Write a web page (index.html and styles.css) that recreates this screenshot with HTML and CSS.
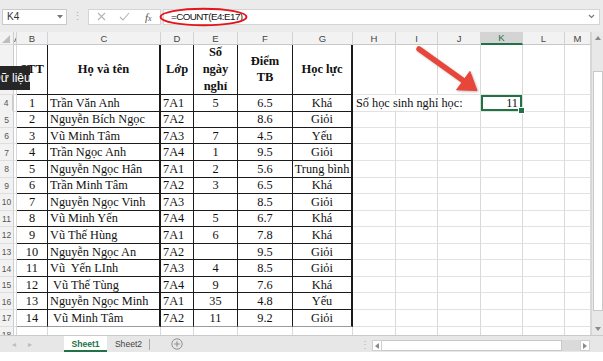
FILE: index.html
```html
<!DOCTYPE html>
<html lang="vi">
<head>
<meta charset="utf-8">
<title>Excel COUNT</title>
<link rel="stylesheet" href="styles.css">
</head>
<body>
<div class="fbar">
  <div class="namebox"><span>K4</span><svg class="caret" width="6" height="4" viewBox="0 0 6 4"><path d="M0 0H6L3 3.5Z" fill="#777"/></svg></div>
  <div class="grip">⋮</div>
  <div class="fnbox">
    <span class="fbtn"><svg width="9" height="9" viewBox="0 0 9 9"><path d="M1 1L8 8M8 1L1 8" stroke="#b3b3b3" stroke-width="1.1"/></svg></span>
    <span class="fbtn"><svg width="11" height="9" viewBox="0 0 11 9"><path d="M1 5L4 8L10 1" stroke="#b3b3b3" stroke-width="1.1" fill="none"/></svg></span>
    <span class="fbtn fx"><i>f</i><span class="x">x</span></span>
  </div>
  <div class="formula"><span class="ftext">=COUNT(E4:E17)</span><svg class="chev" width="7" height="5" viewBox="0 0 7 5"><path d="M1 1L3.5 3.5L6 1" stroke="#777" stroke-width="1.1" fill="none"/></svg></div>
  <svg class="ring" width="90" height="20" viewBox="0 0 90 20"><ellipse cx="44.5" cy="10" rx="43" ry="8.3" fill="none" stroke="#e5141c" stroke-width="2"/></svg>
</div>

<div class="main">
  <div class="grid">
    <div class="row hdr">
      <div class="corner"><svg width="8" height="8" viewBox="0 0 8 8"><path d="M8 0V8H0Z" fill="#bdbdbd"/></svg></div>
      <div class="cola">A</div><div>B</div><div>C</div><div>D</div><div>E</div><div>F</div><div>G</div><div>H</div><div>I</div><div>J</div><div class="sel">K</div><div>L</div><div>M</div>
    </div>
    <div class="row tbl r3">
      <div>3</div><div></div><div>STT</div><div>Họ và tên</div><div>Lớp</div><div>Số<br>ngày<br>nghỉ</div><div>Điểm<br>TB</div><div>Học lực</div><div></div><div></div><div></div><div></div><div></div><div></div>
    </div>
    <div class="row tbl data">
      <div class="on">4</div><div></div><div>1</div><div>Trần Văn Anh</div><div>7A1</div><div>5</div><div>6.5</div><div>Khá</div><div class="spill">Số học sinh nghỉ học:</div><div class="nogrid"></div><div></div><div class="k4">11</div><div></div><div></div>
    </div>
    <div class="row tbl data">
      <div>5</div><div></div><div>2</div><div>Nguyễn Bích Ngọc</div><div>7A2</div><div></div><div>8.6</div><div>Giỏi</div><div></div><div></div><div></div><div></div><div></div><div></div>
    </div>
    <div class="row tbl data">
      <div>6</div><div></div><div>3</div><div>Vũ Minh Tâm</div><div>7A3</div><div>7</div><div>4.5</div><div>Yếu</div><div></div><div></div><div></div><div></div><div></div><div></div>
    </div>
    <div class="row tbl data">
      <div>7</div><div></div><div>4</div><div>Trần Ngọc Anh</div><div>7A4</div><div>1</div><div>9.5</div><div>Giỏi</div><div></div><div></div><div></div><div></div><div></div><div></div>
    </div>
    <div class="row tbl data">
      <div>8</div><div></div><div>5</div><div>Nguyễn Ngọc Hân</div><div>7A1</div><div>2</div><div>5.6</div><div>Trung bình</div><div></div><div></div><div></div><div></div><div></div><div></div>
    </div>
    <div class="row tbl data">
      <div>9</div><div></div><div>6</div><div>Trần Minh Tâm</div><div>7A2</div><div>3</div><div>6.5</div><div>Khá</div><div></div><div></div><div></div><div></div><div></div><div></div>
    </div>
    <div class="row tbl data">
      <div>10</div><div></div><div>7</div><div>Nguyễn Ngọc Vinh</div><div>7A3</div><div></div><div>8.5</div><div>Giỏi</div><div></div><div></div><div></div><div></div><div></div><div></div>
    </div>
    <div class="row tbl data">
      <div>11</div><div></div><div>8</div><div>Vũ Minh Yến</div><div>7A4</div><div>5</div><div>6.7</div><div>Khá</div><div></div><div></div><div></div><div></div><div></div><div></div>
    </div>
    <div class="row tbl data">
      <div>12</div><div></div><div>9</div><div>Vũ Thế Hùng</div><div>7A1</div><div>6</div><div>7.8</div><div>Khá</div><div></div><div></div><div></div><div></div><div></div><div></div>
    </div>
    <div class="row tbl data">
      <div>13</div><div></div><div>10</div><div>Nguyễn Ngọc An</div><div>7A2</div><div></div><div>9.5</div><div>Giỏi</div><div></div><div></div><div></div><div></div><div></div><div></div>
    </div>
    <div class="row tbl data">
      <div>14</div><div></div><div>11</div><div>Vũ&nbsp; Yến LInh</div><div>7A3</div><div>4</div><div>8.5</div><div>Giỏi</div><div></div><div></div><div></div><div></div><div></div><div></div>
    </div>
    <div class="row tbl data">
      <div>15</div><div></div><div>12</div><div>&nbsp;Vũ Thế Tùng</div><div>7A4</div><div>9</div><div>7.6</div><div>Khá</div><div></div><div></div><div></div><div></div><div></div><div></div>
    </div>
    <div class="row tbl data">
      <div>16</div><div></div><div>13</div><div>Nguyễn Ngọc Minh</div><div>7A1</div><div>35</div><div>4.8</div><div>Yếu</div><div></div><div></div><div></div><div></div><div></div><div></div>
    </div>
    <div class="row tbl data last">
      <div>17</div><div></div><div>14</div><div>&nbsp;Vũ Minh Tâm</div><div>7A2</div><div>11</div><div>9.2</div><div>Giỏi</div><div></div><div></div><div></div><div></div><div></div><div></div>
    </div>
    <div class="row data">
      <div>18</div><div></div><div></div><div></div><div></div><div></div><div></div><div></div><div></div><div></div><div></div><div></div><div></div><div></div>
    </div>
  </div>
  <div class="vscroll">
    <div class="varrow"><svg width="6" height="4" viewBox="0 0 6 4"><path d="M0 4H6L3 0Z" fill="#8a8a8a"/></svg></div>
    <div class="vgap"></div>
    <div class="vthumb"></div>
    <div class="vrest"></div>
    <div class="varrow down"><svg width="6" height="4" viewBox="0 0 6 4"><path d="M0 0H6L3 4Z" fill="#8a8a8a"/></svg></div>
  </div>
</div>

<div class="tabbar">
  <div class="nav"><span>◂</span><span>▸</span></div>
  <div class="tab active">Sheet1</div>
  <div class="tab">Sheet2</div>
  <div class="add"><svg width="12" height="12" viewBox="0 0 12 12"><circle cx="6" cy="6" r="5.2" fill="none" stroke="#8f8f8f" stroke-width="1"/><path d="M6 3.2V8.8M3.2 6H8.8" stroke="#8f8f8f" stroke-width="1.1"/></svg></div>
  <div class="tabfill"></div>
  <div class="hgrip">⋮</div>
  <div class="hscroll">
    <div class="harrow"><svg width="4" height="6" viewBox="0 0 4 6"><path d="M4 0V6L0 3Z" fill="#8a8a8a"/></svg></div>
    <div class="hthumb"></div>
    <div class="htrack"></div>
    <div class="harrow"><svg width="4" height="6" viewBox="0 0 4 6"><path d="M0 0V6L4 3Z" fill="#8a8a8a"/></svg></div>
  </div>
</div>
<div class="foot"></div>

<div class="tip"><span>Dữ liệu</span></div>
<svg class="arrow" width="85" height="60" viewBox="0 0 85 60">
  <path d="M14 9L58.5 40.8" stroke="#e8463a" stroke-width="5.5" stroke-linecap="round"/>
  <path d="M51.5 49.8L64.9 31.4L72 50.5Z" fill="#e8463a" stroke="#e8463a" stroke-width="1" stroke-linejoin="round"/>
</svg>
</body>
</html>
```

FILE: styles.css
```css
* { box-sizing: border-box; margin: 0; padding: 0; }
html, body { background: #fff; }
body {
  width: 603px;
  height: 361px;
  overflow: hidden;
  position: relative;
  font-family: "Liberation Sans", Arial, sans-serif;
  color: #222;
}

/* formula bar */
.fbar {
  height: 32px;
  background: #ebebeb;
  display: flex;
  align-items: center;
  padding: 1px 3px 0 2px;
  position: relative;
}
.namebox {
  width: 65px;
  height: 16px;
  background: #fff;
  border: 1px solid #c9c9c9;
  display: flex;
  align-items: center;
  justify-content: space-between;
  padding: 0 3px 0 4px;
  font-size: 10px;
  color: #333;
}
.grip {
  width: 21px;
  text-align: center;
  color: #b0b0b0;
  font-size: 11px;
}
.fnbox {
  width: 73px;
  height: 16px;
  background: #fff;
  border: 1px solid #d4d4d4;
  display: flex;
  align-items: center;
  padding-left: 1px;
}
.fbtn {
  width: 24px;
  display: flex;
  justify-content: center;
  align-items: center;
}
.fx {
  font-family: "Liberation Serif", serif;
  color: #555;
  font-size: 11px;
}
.fx .x { font-size: 8px; margin-top: 4px; font-style: italic; }
.formula {
  flex: 1;
  height: 16px;
  margin-left: 2px;
  background: #fff;
  border: 1px solid #d4d4d4;
  display: flex;
  align-items: center;
  justify-content: space-between;
  padding: 0 4px 0 7px;
}
.ftext {
  font-family: "Liberation Sans", Arial, sans-serif;
  font-size: 9.8px;
  letter-spacing: -0.55px;
  color: #111;
}
.ring { position: absolute; left: 159px; top: 7px; }

/* sheet */
.main { display: flex; height: 303px; overflow: hidden; }
.grid { width: 591px; overflow: hidden; }
.row {
  display: grid;
  grid-template-columns: 14px 3px 31px 113px 33px 44px 55px 60px 43px 42px 43px 42px 42px 26px;
}
.row > div {
  border-right: 1px solid #d9d9d9;
  border-bottom: 1px solid #e2e2e2;
  display: flex;
  align-items: center;
  white-space: nowrap;
  overflow: hidden;
  font-family: "Liberation Serif", "Times New Roman", serif;
  font-size: 12.3px;
  color: #111;
}
.row > div:first-child {
  background: #f2f2f2;
  border-right-color: #cdcdcd;
  border-bottom-color: #dedede;
  font-family: "Liberation Sans", Arial, sans-serif;
  font-size: 8.5px;
  color: #555;
  justify-content: center;
}
.hdr { height: 13px; background: #f2f2f2; }
.hdr > div {
  font-family: "Liberation Sans", Arial, sans-serif;
  font-size: 9.5px;
  color: #444;
  justify-content: center;
  border-right-color: #d3d3d3;
  border-bottom-color: #c8c8c8;
}
.hdr > .corner { justify-content: flex-end; align-items: flex-end; padding: 0 2px 1px 0; }
.hdr > .cola { justify-content: flex-start; padding-left: 0; }
.hdr > .sel {
  background: #d4d4d4;
  color: #217346;
  border-bottom: 2px solid #217346;
}

.r3 { height: 49.7px; }
.r3 > div:nth-child(n+3):nth-child(-n+8) {
  justify-content: center;
  text-align: center;
  font-weight: bold;
  line-height: 16.6px;
  font-size: 12.5px;
}
.data { height: 16.57px; }
.data > div { padding-top: 1px; }
.data > div:nth-child(3),
.data > div:nth-child(6),
.data > div:nth-child(7),
.data > div:nth-child(8) { justify-content: center; }
.data > div:nth-child(4) { padding-left: 2px; }
.data > div:nth-child(5) { padding-left: 2px; }

.tbl > div:nth-child(n+3):nth-child(-n+8) {
  border-right-color: #1b1b1b;
  border-bottom-color: #1b1b1b;
}
.tbl > div:nth-child(4) { border-right: 2px solid #8e8e8e; }
.tbl > div:nth-child(7) { border-right-color: #707070; }
.tbl > div:nth-child(8) { border-right: 2px solid #a3a3a3; }
.last > div:nth-child(n+3):nth-child(-n+8) { border-bottom-color: #9c9c9c; }

.data > .on {
  background: #dcdcdc;
  color: #217346;
  border-right: 2px solid #217346;
}
.data > .spill { overflow: visible; border-right: none; padding-left: 3px; }
.data > .nogrid { border-right: none; }
.data > .k4 {
  justify-content: flex-end;
  padding-right: 4px;
  overflow: visible;
  position: relative;
  box-shadow: inset 0 0 0 2px #217346;
}
.data > .k4::after {
  content: "";
  position: absolute;
  right: -3px;
  bottom: -3px;
  width: 5px;
  height: 5px;
  background: #217346;
  border: 1px solid #fff;
  z-index: 2;
}

/* vertical scrollbar */
.vscroll {
  width: 12px;
  background: #e8e8e8;
  border-left: 1px solid #d6d6d6;
  display: flex;
  flex-direction: column;
  align-items: center;
}
.varrow { height: 12px; width: 100%; display: flex; align-items: center; justify-content: center; }
.varrow.down { height: 10px; align-items: flex-start; padding-top: 2px; }
.vgap { height: 27px; }
.vthumb { height: 240px; width: 10px; background: #fff; border: 1px solid #c8c8c8; }
.vrest { flex: 1; }

/* tabs */
.tabbar {
  height: 17px;
  background: #e7e7e7;
  border-top: 1px solid #cacaca;
  display: flex;
  font-family: "Liberation Sans", Arial, sans-serif;
}
.nav {
  width: 64px;
  display: flex;
  align-items: center;
  gap: 12px;
  padding-left: 12px;
  font-size: 8px;
  color: #bdbdbd;
}
.tab {
  width: 43px;
  display: flex;
  align-items: center;
  justify-content: center;
  font-size: 8.6px;
  color: #444;
  position: relative;
}
.tab.active {
  background: #fff;
  color: #217346;
  font-weight: bold;
  border-bottom: 2px solid #217346;
  padding-top: 1px;
}
.tab:not(.active)::after {
  content: "";
  position: absolute;
  right: 0;
  top: 3px;
  height: 11px;
  border-right: 1px solid #a8a8a8;
}
.add { width: 54px; display: flex; align-items: center; justify-content: center; }
.tabfill { flex: 1; }
.hgrip {
  width: 14px;
  display: flex;
  align-items: center;
  justify-content: center;
  color: #b5b5b5;
  font-size: 10px;
}
.hscroll {
  width: 218px;
  margin-right: 13px;
  margin-top: 4px;
  height: 11px;
  display: flex;
}
.harrow {
  width: 10px;
  background: #fff;
  border: 1px solid #cfcfcf;
  display: flex;
  align-items: center;
  justify-content: center;
}
.hthumb { width: 180px; background: #fff; border: 1px solid #c8c8c8; border-left: none; }
.htrack { flex: 1; background: #dadada; }
.foot { height: 9px; background: #fff; }

/* overlays */
.tip {
  position: absolute;
  left: 0;
  top: 66px;
  width: 30px;
  height: 24px;
  background: #262626;
  color: #fff;
  font-size: 12px;
  display: flex;
  align-items: center;
  overflow: hidden;
}
.tip span { margin-left: -8px; white-space: nowrap; }
.arrow {
  position: absolute;
  left: 405px;
  top: 40px;
  filter: drop-shadow(1px 1px 1px rgba(0, 0, 0, 0.25));
}
```
